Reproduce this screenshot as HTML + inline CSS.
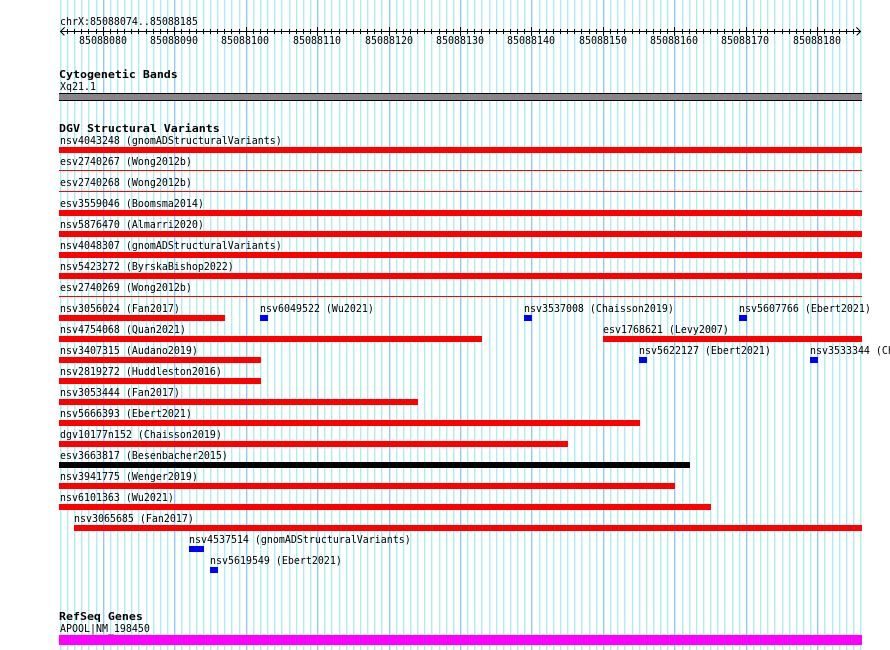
<!DOCTYPE html>
<html><head><meta charset="utf-8"><style>
html,body{margin:0;padding:0;background:#fff;width:890px;height:650px;overflow:hidden}
svg{display:block}
text{font-family:"DejaVu Sans Mono","Liberation Mono",monospace;font-size:11px;fill:#000;white-space:pre;transform-box:fill-box;transform-origin:0 50%;transform:scaleX(.906)}
text.b{font-weight:bold;transform:scaleX(1.057)}
</style></head><body>
<svg width="890" height="650" viewBox="0 0 890 650" xmlns="http://www.w3.org/2000/svg" shape-rendering="crispEdges">
<defs>
<path id="minor" fill="none" d="M60.5 0V650M67.5 0V650M74.5 0V650M81.5 0V650M88.5 0V650M96.5 0V650M110.5 0V650M117.5 0V650M124.5 0V650M131.5 0V650M138.5 0V650M146.5 0V650M153.5 0V650M160.5 0V650M167.5 0V650M181.5 0V650M189.5 0V650M196.5 0V650M203.5 0V650M210.5 0V650M217.5 0V650M224.5 0V650M231.5 0V650M239.5 0V650M253.5 0V650M260.5 0V650M267.5 0V650M274.5 0V650M281.5 0V650M289.5 0V650M296.5 0V650M303.5 0V650M310.5 0V650M324.5 0V650M331.5 0V650M339.5 0V650M346.5 0V650M353.5 0V650M360.5 0V650M367.5 0V650M374.5 0V650M381.5 0V650M396.5 0V650M403.5 0V650M410.5 0V650M417.5 0V650M424.5 0V650M431.5 0V650M439.5 0V650M446.5 0V650M453.5 0V650M467.5 0V650M474.5 0V650M481.5 0V650M489.5 0V650M496.5 0V650M503.5 0V650M510.5 0V650M517.5 0V650M524.5 0V650M539.5 0V650M546.5 0V650M553.5 0V650M560.5 0V650M567.5 0V650M574.5 0V650M581.5 0V650M589.5 0V650M596.5 0V650M610.5 0V650M617.5 0V650M624.5 0V650M632.5 0V650M639.5 0V650M646.5 0V650M653.5 0V650M660.5 0V650M667.5 0V650M682.5 0V650M689.5 0V650M696.5 0V650M703.5 0V650M710.5 0V650M717.5 0V650M724.5 0V650M732.5 0V650M739.5 0V650M753.5 0V650M760.5 0V650M767.5 0V650M774.5 0V650M782.5 0V650M789.5 0V650M796.5 0V650M803.5 0V650M810.5 0V650M824.5 0V650M832.5 0V650M839.5 0V650M846.5 0V650M853.5 0V650M860.5 0V650"/>
<path id="major" fill="none" d="M103.5 0V650M174.5 0V650M246.5 0V650M317.5 0V650M389.5 0V650M460.5 0V650M531.5 0V650M603.5 0V650M674.5 0V650M746.5 0V650M817.5 0V650"/>
</defs>
<rect width="890" height="650" fill="#fff"/>
<use href="#minor" x="1" stroke="#def8fa" stroke-width="1"/>
<use href="#major" x="1" stroke="#d4ecfa" stroke-width="1"/>
<use href="#minor" stroke="#aeeef2" stroke-width="1"/>
<use href="#major" stroke="#8ccdf0" stroke-width="1"/>
<!-- ruler -->
<path stroke="#000" stroke-width="1" fill="none" d="M60 31.5H861M64.5 27.5L60.5 31.5L64.5 35.5M856.5 27.5L860.5 31.5L856.5 35.5"/>
<path stroke="#000" stroke-width="1" fill="none" d="M67.5 29V34M74.5 29V34M81.5 29V34M88.5 29V34M96.5 29V34M110.5 29V34M117.5 29V34M124.5 29V34M131.5 29V34M138.5 29V34M146.5 29V34M153.5 29V34M160.5 29V34M167.5 29V34M181.5 29V34M189.5 29V34M196.5 29V34M203.5 29V34M210.5 29V34M217.5 29V34M224.5 29V34M231.5 29V34M239.5 29V34M253.5 29V34M260.5 29V34M267.5 29V34M274.5 29V34M281.5 29V34M289.5 29V34M296.5 29V34M303.5 29V34M310.5 29V34M324.5 29V34M331.5 29V34M339.5 29V34M346.5 29V34M353.5 29V34M360.5 29V34M367.5 29V34M374.5 29V34M381.5 29V34M396.5 29V34M403.5 29V34M410.5 29V34M417.5 29V34M424.5 29V34M431.5 29V34M439.5 29V34M446.5 29V34M453.5 29V34M467.5 29V34M474.5 29V34M481.5 29V34M489.5 29V34M496.5 29V34M503.5 29V34M510.5 29V34M517.5 29V34M524.5 29V34M539.5 29V34M546.5 29V34M553.5 29V34M560.5 29V34M567.5 29V34M574.5 29V34M581.5 29V34M589.5 29V34M596.5 29V34M610.5 29V34M617.5 29V34M624.5 29V34M632.5 29V34M639.5 29V34M646.5 29V34M653.5 29V34M660.5 29V34M667.5 29V34M682.5 29V34M689.5 29V34M696.5 29V34M703.5 29V34M710.5 29V34M717.5 29V34M724.5 29V34M732.5 29V34M739.5 29V34M753.5 29V34M760.5 29V34M767.5 29V34M774.5 29V34M782.5 29V34M789.5 29V34M796.5 29V34M803.5 29V34M810.5 29V34M824.5 29V34M832.5 29V34M839.5 29V34M846.5 29V34M853.5 29V34"/>
<path stroke="#000" stroke-width="1" fill="none" d="M103.5 27V36M174.5 27V36M246.5 27V36M317.5 27V36M389.5 27V36M460.5 27V36M531.5 27V36M603.5 27V36M674.5 27V36M746.5 27V36M817.5 27V36"/>
<text x="60" y="25">chrX:85088074..85088185</text>
<text x="79" y="44">85088080</text>
<text x="150" y="44">85088090</text>
<text x="221" y="44">85088100</text>
<text x="293" y="44">85088110</text>
<text x="365" y="44">85088120</text>
<text x="436" y="44">85088130</text>
<text x="507" y="44">85088140</text>
<text x="579" y="44">85088150</text>
<text x="650" y="44">85088160</text>
<text x="721" y="44">85088170</text>
<text x="793" y="44">85088180</text>
<!-- cytogenetic -->
<text class="b" x="59" y="78">Cytogenetic Bands</text>
<text x="60" y="90">Xq21.1</text>
<rect x="59" y="93" width="803" height="8" fill="#000"/>
<rect x="59" y="94" width="803" height="6" fill="#888688"/>
<!-- DGV -->
<text class="b" x="59" y="132">DGV Structural Variants</text>
<g fill="#f00">
<rect x="59" y="147" width="803" height="6"/>
<rect x="59" y="170" width="803" height="1"/>
<rect x="59" y="191" width="803" height="1"/>
<rect x="59" y="210" width="803" height="6"/>
<rect x="59" y="231" width="803" height="6"/>
<rect x="59" y="252" width="803" height="6"/>
<rect x="59" y="273" width="803" height="6"/>
<rect x="59" y="296" width="803" height="1"/>
<rect x="59" y="315" width="166" height="6"/>
<rect x="59" y="336" width="423" height="6"/>
<rect x="603" y="336" width="259" height="6"/>
<rect x="59" y="357" width="202" height="6"/>
<rect x="59" y="378" width="202" height="6"/>
<rect x="59" y="399" width="359" height="6"/>
<rect x="59" y="420" width="581" height="6"/>
<rect x="59" y="441" width="509" height="6"/>
<rect x="59" y="483" width="616" height="6"/>
<rect x="59" y="504" width="652" height="6"/>
<rect x="74" y="525" width="788" height="6"/>
</g>
<rect x="59" y="462" width="631" height="6" fill="#000"/>
<g fill="#00f">
<rect x="260" y="315" width="8" height="6"/>
<rect x="524" y="315" width="8" height="6"/>
<rect x="739" y="315" width="8" height="6"/>
<rect x="639" y="357" width="8" height="6"/>
<rect x="810" y="357" width="8" height="6"/>
<rect x="189" y="546" width="15" height="6"/>
<rect x="210" y="567" width="8" height="6"/>
</g>
<text x="60" y="144">nsv4043248 (gnomADStructuralVariants)</text>
<text x="60" y="165">esv2740267 (Wong2012b)</text>
<text x="60" y="186">esv2740268 (Wong2012b)</text>
<text x="60" y="207">esv3559046 (Boomsma2014)</text>
<text x="60" y="228">nsv5876470 (Almarri2020)</text>
<text x="60" y="249">nsv4048307 (gnomADStructuralVariants)</text>
<text x="60" y="270">nsv5423272 (ByrskaBishop2022)</text>
<text x="60" y="291">esv2740269 (Wong2012b)</text>
<text x="60" y="312">nsv3056024 (Fan2017)</text>
<text x="260" y="312">nsv6049522 (Wu2021)</text>
<text x="524" y="312">nsv3537008 (Chaisson2019)</text>
<text x="739" y="312">nsv5607766 (Ebert2021)</text>
<text x="60" y="333">nsv4754068 (Quan2021)</text>
<text x="603" y="333">esv1768621 (Levy2007)</text>
<text x="60" y="354">nsv3407315 (Audano2019)</text>
<text x="639" y="354">nsv5622127 (Ebert2021)</text>
<text x="810" y="354">nsv3533344 (Chaisson2019)</text>
<text x="60" y="375">nsv2819272 (Huddleston2016)</text>
<text x="60" y="396">nsv3053444 (Fan2017)</text>
<text x="60" y="417">nsv5666393 (Ebert2021)</text>
<text x="60" y="438">dgv10177n152 (Chaisson2019)</text>
<text x="60" y="459">esv3663817 (Besenbacher2015)</text>
<text x="60" y="480">nsv3941775 (Wenger2019)</text>
<text x="60" y="501">nsv6101363 (Wu2021)</text>
<text x="74" y="522">nsv3065685 (Fan2017)</text>
<text x="189" y="543">nsv4537514 (gnomADStructuralVariants)</text>
<text x="210" y="564">nsv5619549 (Ebert2021)</text>
<!-- RefSeq -->
<text class="b" x="59" y="620">RefSeq Genes</text>
<text x="60" y="632">APOOL|NM_198450</text>
<rect x="59" y="635" width="803" height="10" fill="#f0f"/>
</svg>
</body></html>
